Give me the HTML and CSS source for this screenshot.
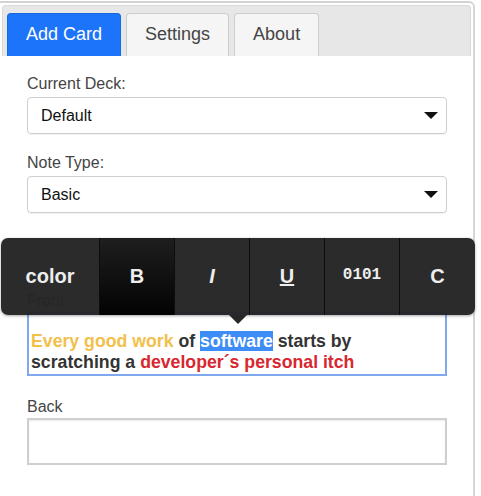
FILE: index.html
```html
<!DOCTYPE html>
<html>
<head>
<meta charset="utf-8">
<link rel="stylesheet" href="styles.css">
</head>
<body>
<div class="panel">
  <div class="tabs">
    <div class="tab active">Add Card</div>
    <div class="tab">Settings</div>
    <div class="tab">About</div>
  </div>
  <div class="form">
    <div class="label first">Current Deck:</div>
    <div class="select"><span>Default</span><span class="caret"></span></div>
    <div class="label">Note Type:</div>
    <div class="select"><span>Basic</span><span class="caret"></span></div>
    <div class="label front-label">Front</div>
    <div class="field front"><span class="yellow">Every good work</span> of <span class="sel">software</span> starts by scratching a <span class="red">developer´s personal itch</span></div>
    <div class="label back-label">Back</div>
    <div class="field back"></div>
  </div>
</div>
<div class="toolbar">
  <div class="tbtn first">color</div>
  <div class="tbtn active">B</div>
  <div class="tbtn ital">I</div>
  <div class="tbtn und">U</div>
  <div class="tbtn mono">0101</div>
  <div class="tbtn last">C</div>
</div>
</body>
</html>
```
FILE: styles.css
```css
html, body {
  margin: 0;
  padding: 0;
  background: #fff;
}
body {
  font-family: "Liberation Sans", Arial, sans-serif;
  color: #333;
  width: 481px;
  height: 496px;
  overflow: hidden;
}
.panel {
  margin-top: 1px;
  width: 473px;
  height: 500px;
  border-top: 2px solid #d2d2d2;
  border-right: 2px solid #d6d6d6;
  border-top-right-radius: 6px;
  box-sizing: content-box;
}
.tabs {
  margin: 2px 2px 0 2px;
  height: 51px;
  box-sizing: border-box;
  background: #e7e7e7;
  border: 1px solid #d9d9d9;
  border-bottom: none;
  border-radius: 4px 4px 0 0;
  padding: 7px 0 0 4px;
  display: flex;
  gap: 5px;
}
.tab {
  padding: 0 18px;
  border: 1px solid #cdcdcd;
  border-bottom: none;
  border-radius: 4px 4px 0 0;
  background: #f5f5f5;
  color: #444;
  font-size: 18px;
  display: flex;
  align-items: center;
  padding-bottom: 2px;
}
.tab.active {
  background: #1c74fb;
  border-color: #1666e6;
  color: #fff;
}
.form {
  padding-left: 27px;
}
.label {
  font-size: 16px;
  line-height: 20px;
  color: #444;
  margin-top: 19px;
  margin-bottom: 3px;
}
.label.first {
  margin-top: 18px;
}
.front-label {
  margin-top: 78px;
  margin-bottom: 1px;
}
.back-label {
  margin-top: 21px;
  margin-bottom: 1px;
}
.select {
  width: 420px;
  height: 37px;
  box-sizing: border-box;
  border: 1px solid #cfcfcf;
  border-radius: 4px;
  box-shadow: 0 1px 1px rgba(0,0,0,0.06);
  display: flex;
  align-items: center;
  justify-content: space-between;
  padding: 0 8px 0 13px;
  font-size: 16px;
  color: #111;
}
.caret {
  width: 0;
  height: 0;
  border-left: 7px solid transparent;
  border-right: 7px solid transparent;
  border-top: 7px solid #111;
}
.field {
  width: 420px;
  box-sizing: border-box;
  border: 2px solid #cfcfcf;
}
.field.front {
  height: 64px;
  border-color: #7fa8ee;
  padding: 17px 4px 0 2px;
  font-weight: bold;
  font-size: 17.7px;
  line-height: 21px;
  color: #333;
}
.field.back {
  height: 47px;
  box-shadow: inset 0 1px 2px rgba(0,0,0,0.08);
}
.yellow { color: #f2c04b; }
.red { color: #d8272f; }
.sel {
  background: #3e8cf6;
  color: #fff;
}
.toolbar {
  position: absolute;
  left: 1px;
  top: 238px;
  width: 474px;
  height: 77px;
  display: flex;
  background: rgba(36, 36, 36, 0.97);
  border-radius: 7px;
  box-shadow: 0 1px 3px rgba(0,0,0,0.35);
}
.toolbar::after {
  content: "";
  position: absolute;
  left: 228px;
  bottom: -9px;
  width: 0;
  height: 0;
  border-left: 9px solid transparent;
  border-right: 9px solid transparent;
  border-top: 9px solid #272727;
}
.tbtn {
  width: 74px;
  border-right: 1px solid #0d0d0d;
  display: flex;
  align-items: center;
  justify-content: center;
  color: #eee;
  font-weight: bold;
  font-size: 20px;
}
.tbtn.first {
  width: 98px;
  border-radius: 7px 0 0 7px;
}
.tbtn.last {
  width: 75px;
  border-right: none;
}
.tbtn.active {
  background: linear-gradient(to bottom, #1e1e1e, #030303);
}
.tbtn.ital { font-style: italic; }
.tbtn.und { text-decoration: underline; }
.tbtn.mono {
  font-family: "Liberation Mono", "Courier New", monospace;
  font-size: 16px;
  padding-bottom: 4px;
}
```
